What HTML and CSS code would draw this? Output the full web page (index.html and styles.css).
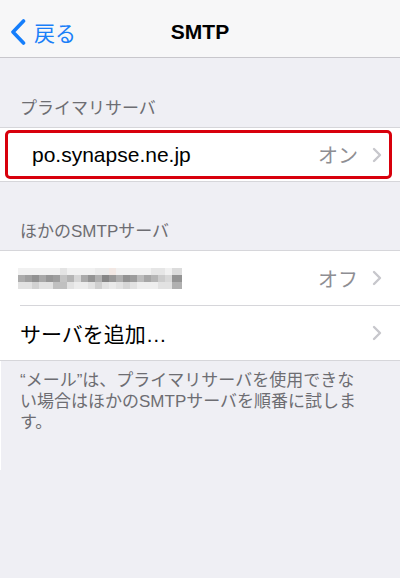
FILE: index.html
```html
<!DOCTYPE html>
<html lang="ja">
<head>
    <meta charset="UTF-8">
    <meta name="viewport" content="width=device-width, initial-scale=1.0">
    <title>SMTP</title>
    <link rel="stylesheet" href="styles.css">
</head>
<body>
    <header class="navbar">
        <a href="#back" class="back">
            <svg class="back-chevron" width="16" height="26" viewBox="0 0 16 26">
                <path d="M13.5 2 L3 13 L13.5 24" fill="none" stroke="#157efb" stroke-width="3.6" stroke-linecap="round" stroke-linejoin="round"/>
            </svg>
            <span>戻る</span>
        </a>
        <h1 class="title">SMTP</h1>
        <span></span>
    </header>

    <div class="section-header section-first">プライマリサーバ</div>
    <div class="group">
        <div class="row row-primary">
            <span class="label">po.synapse.ne.jp</span>
            <span class="detail">オン</span>
            <svg class="chevron" width="10" height="16" viewBox="0 0 10 16">
                <path d="M2 2 L8 8 L2 14" fill="none" stroke="#c7c7cc" stroke-width="2.4" stroke-linecap="round" stroke-linejoin="round"/>
            </svg>
            <div class="highlight"></div>
        </div>
    </div>

    <div class="section-header">ほかのSMTPサーバ</div>
    <div class="group">
        <div class="row">
            <!-- pixelated (hidden) server name -->
            <svg class="mosaic" width="164" height="21" viewBox="0 0 164 21">
                <g>
                    <rect x="0" y="0" width="164" height="7" fill="#f1f1f1"/>
                    <rect x="42" y="0" width="7" height="7" fill="#e4e4e4"/>
                    <rect x="77" y="0" width="14" height="7" fill="#ebebeb"/>
                    <rect x="91" y="0" width="7" height="7" fill="#f2e8e4"/>
                    <rect x="133" y="0" width="14" height="7" fill="#e6e6e6"/>
                    <rect x="154" y="0" width="10" height="7" fill="#dcdcdc"/>
                </g>
                <g>
                    <rect x="0" y="7" width="7" height="7" fill="#acacac"/>
                    <rect x="7" y="7" width="7" height="7" fill="#a0a0a0"/>
                    <rect x="14" y="7" width="7" height="7" fill="#929292"/>
                    <rect x="21" y="7" width="7" height="7" fill="#a8a8a8"/>
                    <rect x="28" y="7" width="7" height="7" fill="#969696"/>
                    <rect x="35" y="7" width="7" height="7" fill="#9e9e9e"/>
                    <rect x="42" y="7" width="7" height="7" fill="#c4c4c4"/>
                    <rect x="49" y="7" width="7" height="7" fill="#b4b4b4"/>
                    <rect x="56" y="7" width="7" height="7" fill="#d6d6d6"/>
                    <rect x="63" y="7" width="7" height="7" fill="#aaaaaa"/>
                    <rect x="70" y="7" width="7" height="7" fill="#949494"/>
                    <rect x="77" y="7" width="7" height="7" fill="#b0b0b0"/>
                    <rect x="84" y="7" width="7" height="7" fill="#868686"/>
                    <rect x="91" y="7" width="7" height="7" fill="#989898"/>
                    <rect x="98" y="7" width="7" height="7" fill="#aeaeae"/>
                    <rect x="105" y="7" width="7" height="7" fill="#929292"/>
                    <rect x="112" y="7" width="7" height="7" fill="#9c9c9c"/>
                    <rect x="119" y="7" width="7" height="7" fill="#bcbcbc"/>
                    <rect x="126" y="7" width="7" height="7" fill="#a6a6a6"/>
                    <rect x="133" y="7" width="7" height="7" fill="#b5b5b5"/>
                    <rect x="140" y="7" width="7" height="7" fill="#cccccc"/>
                    <rect x="147" y="7" width="7" height="7" fill="#d8d8d8"/>
                    <rect x="154" y="7" width="10" height="7" fill="#949494"/>
                </g>
                <g>
                    <rect x="0" y="14" width="164" height="7" fill="#e2e2e2"/>
                    <rect x="14" y="14" width="7" height="7" fill="#d2d2d2"/>
                    <rect x="35" y="14" width="14" height="7" fill="#c0c0c0"/>
                    <rect x="56" y="14" width="14" height="7" fill="#ececec"/>
                    <rect x="77" y="14" width="7" height="7" fill="#cfcfcf"/>
                    <rect x="91" y="14" width="7" height="7" fill="#eaeaea"/>
                    <rect x="105" y="14" width="7" height="7" fill="#d6d6d6"/>
                    <rect x="119" y="14" width="21" height="7" fill="#eeeeee"/>
                    <rect x="154" y="14" width="10" height="7" fill="#b0b0b0"/>
                </g>
            </svg>
            <span class="detail">オフ</span>
            <svg class="chevron" width="10" height="16" viewBox="0 0 10 16">
                <path d="M2 2 L8 8 L2 14" fill="none" stroke="#c7c7cc" stroke-width="2.4" stroke-linecap="round" stroke-linejoin="round"/>
            </svg>
        </div>
        <div class="row">
            <span class="label">サーバを追加…</span>
            <svg class="chevron" width="10" height="16" viewBox="0 0 10 16">
                <path d="M2 2 L8 8 L2 14" fill="none" stroke="#c7c7cc" stroke-width="2.4" stroke-linecap="round" stroke-linejoin="round"/>
            </svg>
        </div>
    </div>

    <p class="note">“メール”は、プライマリサーバを使用できな<br>い場合はほかのSMTPサーバを順番に試しま<br>す。</p>
</body>
</html>
```

FILE: styles.css
```css
* {
    margin: 0;
    padding: 0;
    box-sizing: border-box;
}

body {
    background-color: #efeff4;
    font-family: "Liberation Sans", "Noto Sans CJK JP", sans-serif;
    color: #000;
}

.navbar {
    height: 58px;
    padding-top: 6px;
    background-color: #f7f7f8;
    border-bottom: 1px solid #c8c7cc;
    display: grid;
    grid-template-columns: 1fr auto 1fr;
    align-items: center;
}

.back {
    display: flex;
    align-items: center;
    gap: 8px;
    padding-left: 10px;
    color: #1a7ff8;
    font-size: 21px;
    text-decoration: none;
}

.back-chevron {
    display: block;
}

.title {
    font-size: 21px;
    font-weight: bold;
}

.section-header {
    height: 68px;
    padding: 40px 20px 0;
    font-size: 17px;
    line-height: 20px;
    color: #6d6d72;
}

.section-first {
    height: 69px;
    padding-top: 41px;
}

.group {
    background-color: #fff;
    border-top: 1px solid #d6d6da;
    border-bottom: 1px solid #d6d6da;
}

.row {
    position: relative;
    height: 54px;
    display: flex;
    align-items: center;
    padding: 0 18px 0 20px;
    font-size: 21px;
}

.row + .row::before {
    content: "";
    position: absolute;
    top: -1px;
    left: 20px;
    right: 0;
    border-top: 1px solid #d6d6da;
}

.row + .row {
    margin-top: 1px;
}

.row-primary {
    height: 53px;
    padding-left: 32px;
}

.label {
    flex: 1;
}

.mosaic {
    display: block;
    margin-left: -2px;
    margin-right: auto;
}

.detail {
    color: #8e8e93;
    font-size: 20px;
    margin-right: 14px;
}

.chevron {
    display: block;
    flex-shrink: 0;
}

.highlight {
    position: absolute;
    top: 2px;
    bottom: 2px;
    left: 5px;
    right: 8px;
    border: 3px solid #d8000c;
    border-radius: 5px;
}

.note {
    height: 109px;
    padding: 9px 20px 0 19px;
    border-left: 1px solid #fff;
    font-size: 17px;
    line-height: 21px;
    color: #6d6d72;
}
```
